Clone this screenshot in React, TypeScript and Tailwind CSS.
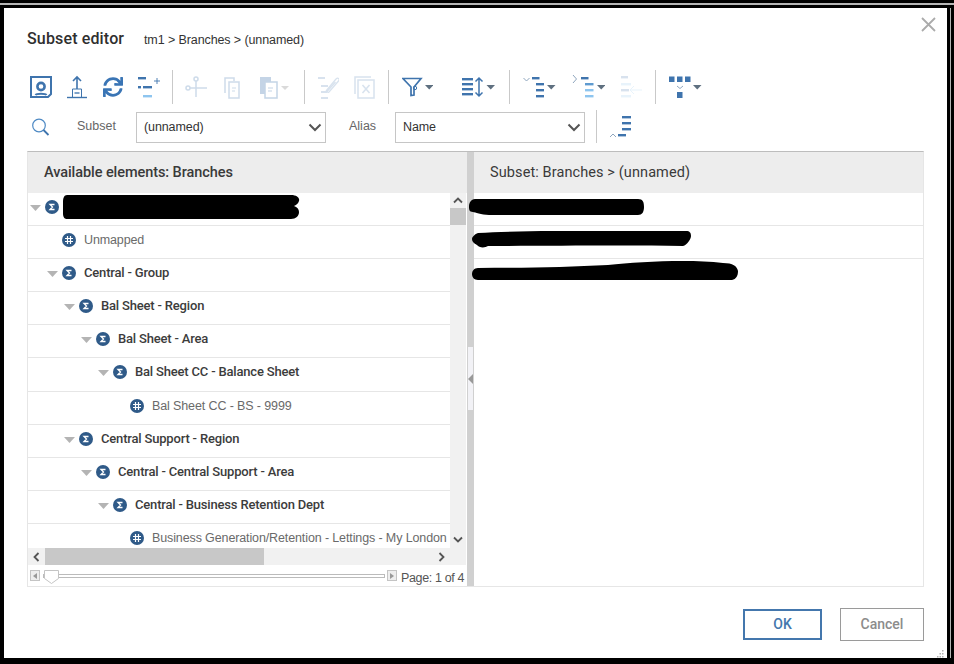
import { FaSync } from 'react-icons/fa';

const BLUE = '#3f74ad';
const LIGHT = '#8ec5ef';
const CARET = '#5f7080';

const Caret = ({ x, y = 15 }: { x: number; y?: number }) => (
  <path d={`M${x} ${y}h8.5l-4.25 4.5z`} fill={CARET} />
);

const Bar = ({ x, y, w, h = 2.4, c = BLUE }: { x: number; y: number; w: number; h?: number; c?: string }) => (
  <rect x={x} y={y} width={w} height={h} fill={c} />
);

const Separator = ({ className }: { className: string }) => <div className={`w-px h-[34px] bg-[#c9c9c9] ${className}`} />;

const DiskIcon = () => (
  <svg width="22" height="34" className="ml-[3px]" fill="none" stroke={BLUE}>
    <path d="M1 7h20v17l-3 3H1z" strokeWidth="2" />
    <circle cx="11" cy="16.5" r="3.6" strokeWidth="2.6" />
    <path d="M5.5 25c1-1.8 10-1.8 11 0" strokeWidth="2" />
  </svg>
);

const UploadIcon = () => (
  <svg width="20" height="34" className="ml-[15px]" fill="none" stroke={BLUE}>
    <path d="M10 19V7M6 11l4-4 4 4" strokeWidth="1.6" />
    <path d="M5.5 27v-8h9v8" strokeWidth="1" />
    <path d="M7.500 23h5" stroke="#7fa3c9" strokeWidth="2" />
    <path d="M0 27.5h20" strokeWidth="1.4" />
  </svg>
);

const AddIcon = () => (
  <svg width="22" height="34" className="ml-[15px]">
    <Bar x={0} y={7} w={8} />
    <Bar x={0} y={16} w={3} />
    <Bar x={5} y={16} w={9} />
    <Bar x={5} y={25} w={9} c={LIGHT} />
    <path d="M19 8v6M16 11h6" stroke={BLUE} strokeWidth="0.9" />
  </svg>
);

const ScissorsIcon = () => (
  <svg width="22" height="34" className="ml-[12px] opacity-25" fill="none" stroke={BLUE} strokeWidth="1.5">
    <circle cx="11" cy="9" r="2" />
    <circle cx="3" cy="18" r="2" />
    <path d="M11 11v16M5 18h17" />
  </svg>
);

const CopyIcon = () => (
  <svg width="16" height="34" className="ml-[17px] opacity-25" fill="none" stroke={BLUE} strokeWidth="1.5">
    <path d="M1 23V8h9v3" />
    <path d="M5 12h10v16H5z" />
    <path d="M8 18h4M8 21h3" strokeWidth="1" />
  </svg>
);

const PasteIcon = () => (
  <svg width="29" height="34" className="ml-[20px] opacity-30">
    <rect x="0" y="7" width="11" height="17" fill={BLUE} />
    <rect x="5" y="12" width="12" height="16" fill="#fff" stroke={BLUE} strokeWidth="1.5" />
    <path d="M8 18h5M8 21h4" stroke={BLUE} />
    <path d="M21 16h8l-4 4z" fill="#888" />
  </svg>
);

const EditIcon = () => (
  <svg width="21" height="34" className="ml-[13px] opacity-20" fill="none" stroke={BLUE}>
    <path d="M0 8h7M3 16h7M3 22h6M3 28h7" strokeWidth="2.2" />
    <path d="M8 21L18 9c2-2 4 0 2.5 2L11 22c-1 1-2 0-1.5-1l8-9" strokeWidth="1.2" />
  </svg>
);

const DeleteIcon = () => (
  <svg width="21" height="34" className="ml-[15px] opacity-20" fill="none" stroke={BLUE}>
    <path d="M1 24V7h16" strokeWidth="1.5" />
    <path d="M4 10h16v18H4z" strokeWidth="1.5" />
    <path d="M8.500 15l7 8M15.500 15l-7 8" strokeWidth="1.5" />
  </svg>
);

const FilterIcon = () => (
  <svg width="31" height="34" className="ml-[13px]" fill="none">
    <path d="M1 8.500h18l-7 8.500v8l-3 0.500V17z" stroke={BLUE} strokeWidth="1.7" />
    <circle cx="13" cy="18" r="1.700" stroke={BLUE} />
    <Caret x={23} />
  </svg>
);

const SortIcon = () => (
  <svg width="34" height="34" className="ml-[28px]" fill="none">
    <Bar x={1} y={8} w={11} />
    <Bar x={1} y={13} w={11} />
    <Bar x={1} y={18} w={11} />
    <Bar x={1} y={23} w={11} />
    <path d="M18 8v18M14.500 11.500L18 8l3.500 3.500M14.500 22.500L18 26l3.500-3.500" stroke={BLUE} strokeWidth="1.500" />
    <Caret x={25.500} />
  </svg>
);

const ExpandIcon = () => (
  <svg width="33" height="34" className="ml-[13px]" fill="none">
    <path d="M0.500 8l3 3 3-3" stroke="#8fa6be" />
    <Bar x={9} y={7} w={7.500} />
    <Bar x={13} y={13} w={8} />
    <Bar x={13} y={19} w={8} />
    <Bar x={13} y={25} w={8} />
    <Caret x={24} />
  </svg>
);

const NextLevelIcon = () => (
  <svg width="33" height="34" className="ml-[16px]" fill="none">
    <path d="M1 5l3.500 4L1 13" stroke="#8fa6be" />
    <Bar x={9} y={7} w={7.500} />
    <Bar x={13} y={13} w={8.500} c="#5f9bd0" />
    <Bar x={13} y={19} w={8.500} c={LIGHT} />
    <Bar x={13} y={25} w={8.500} c={LIGHT} />
    <Caret x={25} />
  </svg>
);

const CollapseIcon = () => (
  <svg width="21" height="34" className="ml-[16px] opacity-20" fill="none">
    <Bar x={0} y={6} w={7} />
    <Bar x={0} y={13} w={10} c={LIGHT} />
    <Bar x={0} y={19} w={8} />
    <Bar x={0} y={25} w={10} c={LIGHT} />
    <path d="M21 20H9M13 16l-4 4 4 4" stroke={LIGHT} />
  </svg>
);

const LevelIcon = () => (
  <svg width="33" height="34" className="ml-[13px]" fill="none">
    <rect x="0" y="6.500" width="5.500" height="5.500" fill={BLUE} />
    <rect x="8" y="6.500" width="5.500" height="5.500" fill={BLUE} />
    <rect x="16" y="6.500" width="5.500" height="5.500" fill={BLUE} />
    <path d="M8 16l3 2.500 3-2.500" stroke="#8fa6be" />
    <rect x="8" y="22" width="5.500" height="6" fill={BLUE} />
    <Caret x={24} />
  </svg>
);

const SearchIcon = () => (
  <svg width="19" height="19" className="ml-[4px] mb-[6px]" fill="none">
    <circle cx="8" cy="7.500" r="6.300" stroke="#4f8ac4" strokeWidth="1.200" />
    <path d="M12.500 12l5 5" stroke={BLUE} strokeWidth="1.800" />
  </svg>
);

const LastLevelIcon = () => (
  <svg width="23" height="24" className="ml-[12px] mb-[3px]" fill="none">
    <path d="M1 21l3-3 3 3" stroke="#8fa6be" />
    <Bar x={13} y={0} w={9} />
    <Bar x={13} y={6} w={9} />
    <Bar x={13} y={12} w={9} />
    <Bar x={9} y={18} w={8} />
  </svg>
);

const Chevron = () => (
  <svg width="14" height="9" fill="none">
    <path d="M1.500 1.500L7 7l5.500-5.500" stroke="#555" strokeWidth="2" />
  </svg>
);

const SelectBox = ({ value, className }: { value: string; className?: string }) => (
  <div className={`w-[190px] h-[31px] border border-[#c6c6c6] flex items-center justify-between pl-[7px] pr-[3px] text-[12.5px] tracking-[-0.1px] text-[#333] bg-white ${className ?? ''}`}>
    <span>{value}</span>
    <Chevron />
  </div>
);

const NodeIcon = ({ kind }: { kind: 'sum' | 'leaf' }) => (
  <span className="w-[14px] h-[14px] rounded-full bg-[#2f5a88] flex items-center justify-center shrink-0">
    {kind === 'sum' ? (
      <svg width="8" height="8" fill="none"><path d="M6.500 1.500H2l2.500 2.500L2 6.500h4.500" stroke="#fff" strokeWidth="1.300" /></svg>
    ) : (
      <svg width="10" height="10" fill="none"><path d="M3.500 1v8M6.500 1v8M1 3.500h8M1 6.500h8" stroke="#fff" strokeWidth="1.200" /></svg>
    )}
  </span>
);

type TreeRow = { level: number; kind: 'sum' | 'leaf'; label: string };

const treeRows: TreeRow[] = [
  { level: 0, kind: 'sum', label: '' },
  { level: 1, kind: 'leaf', label: 'Unmapped' },
  { level: 1, kind: 'sum', label: 'Central - Group' },
  { level: 2, kind: 'sum', label: 'Bal Sheet - Region' },
  { level: 3, kind: 'sum', label: 'Bal Sheet - Area' },
  { level: 4, kind: 'sum', label: 'Bal Sheet CC - Balance Sheet' },
  { level: 5, kind: 'leaf', label: 'Bal Sheet CC - BS - 9999' },
  { level: 2, kind: 'sum', label: 'Central Support - Region' },
  { level: 3, kind: 'sum', label: 'Central - Central Support - Area' },
  { level: 4, kind: 'sum', label: 'Central - Business Retention Dept' },
  { level: 5, kind: 'leaf', label: 'Business Generation/Retention - Lettings - My London' },
];

const Row = ({ row, index }: { row: TreeRow; index: number }) => (
  <div
    className={`shrink-0 border-b border-[#e6e6e6] flex items-center whitespace-nowrap relative ${index === 5 ? 'h-[34px] pb-[5px]' : 'h-[33px] pb-[4px]'}`}
    style={{ paddingLeft: row.level * 17 + 2 }}
  >
    {row.kind === 'sum' ? (
      <svg width="11" height="6" className="mr-[4px] shrink-0 mt-[2px]"><path d="M0 0h11L5.500 6z" fill="#b4b4b4" /></svg>
    ) : (
      <span className="w-[15px] shrink-0" />
    )}
    <NodeIcon kind={row.kind} />
    <span className={row.kind === 'sum' ? "ml-[8px] text-[13px] font-['Roboto',sans-serif] font-medium text-[#3c3c3c] tracking-[-0.18px]" : 'ml-[8px] text-[12.5px] text-[#6a6a6a] tracking-[-0.12px]'}>
      {row.label}
    </span>
    {index === 0 && (
      <svg width="238" height="27" className="absolute left-[35px] top-[1px]">
        <path d="M4 1h224c6 0 9 3 8 6-1 3-3 4-5 5 3 1 5 3 5 6 0 4-3 7-8 7H60c-20 0-40 0-56 0-5 0-4-7-4-11S-1 1 4 1z" fill="#000" />
      </svg>
    )}
  </div>
);

const Redaction = ({ d, w, h, className }: { d: string; w: number; h: number; className: string }) => (
  <svg width={w} height={h} className={`absolute ${className}`}>
    <path d={d} fill="#000" />
  </svg>
);

export default function App() {
  return (
    <div className="w-[954px] h-[664px] bg-black overflow-hidden font-['Liberation_Sans',sans-serif] flex flex-col">
      <div className="h-[3px] shrink-0" />
      <div className="h-[2px] shrink-0 bg-[#b5b5b5]" />
      <div className="h-[3px] shrink-0" />
      <div className="flex flex-1">
        <div className="w-[4px] shrink-0" />
        <div className="w-[943px] h-[650px] bg-white relative pl-[23px] pr-[23px]">
          <svg width="15" height="15" className="absolute right-[11px] top-[9px]" fill="none">
            <path d="M1 1l13 13M14 1L1 14" stroke="#ababab" strokeWidth="1.800" />
          </svg>

          <div className="h-[62px] flex items-center">
            <span className="text-[16px] text-[#2f2f2f] font-['Roboto',sans-serif] font-medium tracking-[0.15px] w-[117px]">Subset editor</span>
            <span className="text-[12.5px] text-[#333] tracking-[-0.1px] mt-[2px]">tm1 &gt; Branches &gt; (unnamed)</span>
          </div>

          <div className="h-[34px] flex items-center">
            <DiskIcon />
            <UploadIcon />
            <span className="ml-[16px] w-[20px] flex justify-center"><FaSync size={20} color="#3a75b5" /></span>
            <AddIcon />
            <Separator className="ml-[12px]" />
            <ScissorsIcon />
            <CopyIcon />
            <PasteIcon />
            <Separator className="ml-[15px]" />
            <EditIcon />
            <DeleteIcon />
            <Separator className="ml-[13px]" />
            <FilterIcon />
            <SortIcon />
            <Separator className="ml-[14px]" />
            <ExpandIcon />
            <NextLevelIcon />
            <CollapseIcon />
            <Separator className="ml-[13px]" />
            <LevelIcon />
          </div>

          <div className="h-[33px] mt-[6px] mb-[8px] flex items-end">
            <SearchIcon />
            <span className="ml-[27px] w-[59px] text-[12.5px] text-[#666] mb-[7px]">Subset</span>
            <SelectBox value="(unnamed)" />
            <span className="ml-[23px] w-[46px] text-[12.5px] text-[#666] mb-[7px]">Alias</span>
            <SelectBox value="Name" />
            <div className="ml-[11px] w-px h-[33px] bg-[#c9c9c9]" />
            <LastLevelIcon />
          </div>

          <div className="w-[897px] h-[436px] border border-[#e6e6e6] border-t-[#bdbdbd] flex">
            <div className="w-[439px] shrink-0 flex flex-col">
              <div className="h-[41px] shrink-0 bg-[#ededed] flex items-center pl-[16px] text-[14.5px] text-[#3a3a3a] font-['Roboto',sans-serif] font-medium tracking-[-0.07px]">
                Available elements: Branches
              </div>
              <div className="h-[355px] flex">
                <div className="w-[422px] overflow-hidden flex flex-col">
                  {treeRows.map((row, i) => (
                    <Row key={i} row={row} index={i} />
                  ))}
                </div>
                <div className="w-[16px] mr-[1px] bg-[#f1f1f1] flex flex-col items-center">
                  <div className="h-[15px] flex items-center">
                    <svg width="10" height="7" fill="none"><path d="M1 5.500L5 1.500l4 4" stroke="#555" strokeWidth="1.800" /></svg>
                  </div>
                  <div className="w-full h-[17px] bg-[#c8c8c8]" />
                  <div className="mt-auto h-[15px] flex items-center mb-[1px]">
                    <svg width="10" height="7" fill="none"><path d="M1 1.500L5 5.500l4-4" stroke="#555" strokeWidth="1.800" /></svg>
                  </div>
                </div>
              </div>
              <div className="h-[17px] mr-[1px] bg-[#f1f1f1] flex items-center">
                <div className="w-[17px] flex justify-center">
                  <svg width="7" height="10" fill="none"><path d="M5.500 1L1.500 5l4 4" stroke="#555" strokeWidth="1.800" /></svg>
                </div>
                <div className="w-[219px] h-full bg-[#c8c8c8]" />
                <div className="ml-auto mr-[21px] w-[7px] flex justify-center">
                  <svg width="7" height="10" fill="none"><path d="M1.500 1l4 4-4 4" stroke="#555" strokeWidth="1.800" /></svg>
                </div>
              </div>
              <div className="h-[21px] flex items-center pl-[2px]">
                <span className="w-[10px] h-[11px] border border-[#c4c4c4] bg-[#eee] flex items-center justify-center shrink-0">
                  <svg width="4" height="6"><path d="M4 0v6L0 3z" fill="#999" /></svg>
                </span>
                <div className="ml-[3px] w-[342px] h-[4px] border border-[#bbb] relative shrink-0">
                  <svg width="15" height="14" className="absolute left-0 -top-[5px]">
                    <path d="M.5.500h14v8l-7 5-7-5z" fill="#fff" stroke="#c4c4c4" />
                  </svg>
                </div>
                <span className="ml-[2px] w-[10px] h-[11px] border border-[#c4c4c4] bg-[#eee] flex items-center justify-center shrink-0">
                  <svg width="4" height="6"><path d="M0 0v6l4-3z" fill="#999" /></svg>
                </span>
                <span className="ml-[4px] text-[12.5px] text-[#555] tracking-[-0.35px] whitespace-nowrap pt-[6px]">Page: 1 of 4</span>
              </div>
            </div>

            <div className="w-[7px] shrink-0 bg-[#d0d0d0] flex flex-col items-center pt-[195px]">
              <div className="w-[5px] h-[63px] bg-[#f2f2f6] flex items-center justify-center">
                <svg width="5" height="10"><path d="M5 0v10L0 5z" fill="#999" /></svg>
              </div>
            </div>

            <div className="flex-1 flex flex-col">
              <div className="h-[41px] shrink-0 bg-[#ededed] flex items-center pl-[16px] text-[14.5px] text-[#3a3a3a] font-['Roboto',sans-serif] tracking-[0.1px]">
                Subset: Branches &gt; (unnamed)
              </div>
              <div className="h-[33px] border-b border-[#e6e6e6] relative">
                <Redaction className="-left-[5px] top-[6px]" w={176} h={17} d="M6 0h163c5 0 6 3 6 8s-2 8-6 8H20c-8 0-14-3-16-3C0 13 0 10 0 7S2 0 6 0z" />
              </div>
              <div className="h-[33px] border-b border-[#e6e6e6] relative">
                <Redaction className="-left-[2px] top-[5px]" w={220} h={18} d="M6 2c50-3 140-2 208-2 4 0 5 2 5 5s-4 9-8 10c-60-1-140 0-195 0-3 2-9 2-11-1C1 12 0 10 0 8s3-5 6-6z" />
              </div>
              <div className="h-[33px] relative">
                <Redaction className="-left-[2px] top-[1px]" w={267} h={21} d="M6 8c50 0 90-1 130-3 30-3 80-6 115-2 10 0 14 3 15 8 0 5-2 8-6 9H6c-4 0-6-3-6-6s2-6 6-6z" />
              </div>
            </div>
          </div>

          <div className="flex justify-end items-center mt-[21px]">
            <button className="w-[79px] h-[31px] border-2 border-[#4477ad] text-[14px] font-['Roboto',sans-serif] font-medium text-[#4477ad]">OK</button>
            <button className="ml-[18px] w-[84px] h-[33px] border border-[#9a9a9a] text-[14px] font-['Roboto',sans-serif] font-medium text-[#8c8c8c]">Cancel</button>
          </div>

          <svg width="8" height="8" className="absolute right-[2px] bottom-0" fill="#b0b0b0">
            <rect x="5" y="0" width="1.500" height="1.500" />
            <rect x="2.500" y="3" width="1.500" height="1.500" />
            <rect x="5" y="3" width="1.500" height="1.500" />
            <rect x="0" y="6" width="1.500" height="1.500" />
            <rect x="2.500" y="6" width="1.500" height="1.500" />
            <rect x="5" y="6" width="1.500" height="1.500" />
          </svg>
        </div>
        <div className="w-[3px] shrink-0" />
        <div className="w-px shrink-0 bg-[#b5b5b5]" />
      </div>
      <div className="h-[6px] shrink-0" />
    </div>
  );
}
